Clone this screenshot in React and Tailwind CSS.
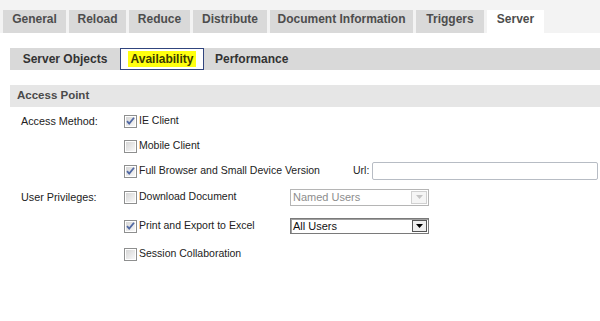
import React from "react";

function Check({ checked }) {
  return (
    <svg width="13" height="13" viewBox="0 0 13 13" className="shrink-0">
      <defs>
        <linearGradient id="cbg" x1="0" y1="0" x2="1" y2="1">
          <stop offset="0" stopColor="#d6d6d6" />
          <stop offset="1" stopColor="#f8f8f8" />
        </linearGradient>
      </defs>
      <rect x="0.5" y="0.5" width="12" height="12" fill="#ffffff" stroke="#8e8f8f" />
      <rect x="2" y="2" width="9" height="9" fill="url(#cbg)" />
      {checked && (
        <path d="M3 6.2 L5.2 8.6 L10 2.8" fill="none" stroke="#5068a3" strokeWidth="1.8" />
      )}
    </svg>
  );
}

function CheckItem({ checked, label }) {
  return (
    <div className="flex items-center gap-[2px] whitespace-nowrap">
      <Check checked={checked} />
      <span className="text-[10.5px] text-[#222]">{label}</span>
    </div>
  );
}

const tabs = [
  ["General", "w-[63px]"],
  ["Reload", "w-[57px]"],
  ["Reduce", "w-[61px]"],
  ["Distribute", "w-[74px]"],
  ["Document Information", "w-[143px]"],
  ["Triggers", "w-[68px]"],
];

export default function App() {
  return (
    <div className="w-[600px] h-[321px] bg-white overflow-hidden font-['Liberation_Sans',Arial,sans-serif]">
      {/* main tabs */}
      <div className="h-[33px] bg-[#f3f3f3] pt-[10px] pl-[3px] flex gap-[3px]">
        {tabs.map(([t, w]) => (
          <div
            key={t}
            className={`${w} h-[23px] bg-[#d9d9d9] text-center pt-[2px] leading-[15px] text-[12px] font-bold text-[#4d4d4d] whitespace-nowrap`}
          >
            {t}
          </div>
        ))}
        <div className="w-[57px] h-[23px] bg-white text-center pt-[2px] leading-[15px] text-[12px] font-bold text-[#4d4d4d]">
          Server
        </div>
      </div>

      {/* sub tabs */}
      <div className="mt-[15px] ml-[10px] h-[22px] bg-[#d9d9d9] flex text-[12px] font-bold text-[#333] leading-[20px]">
        <div className="w-[110px] text-center leading-[22px]">Server Objects</div>
        <div className="w-[84px] h-[22px] border border-[#31457e] bg-white flex items-center justify-center">
          <span className="bg-[#ffff10] px-[3px] leading-[16px] text-[#3a3a00]">Availability</span>
        </div>
        <div className="pl-[11px] leading-[22px]">Performance</div>
      </div>

      {/* section header */}
      <div className="mt-[15px] ml-[10px] h-[22px] bg-[#e6e6e6] flex items-center pl-[7px] text-[11.5px] font-bold text-[#4a4a4a]">
        Access Point
      </div>

      {/* form */}
      <div className="pt-[2px] text-[10.8px] text-[#222]">
        <div className="h-[24px] flex items-center">
          <div className="w-[124px] pl-[21px]">Access Method:</div>
          <CheckItem checked label="IE Client" />
        </div>
        <div className="h-[26px] flex items-center">
          <div className="w-[124px]" />
          <CheckItem label="Mobile Client" />
        </div>
        <div className="h-[24px] flex items-center">
          <div className="w-[124px] shrink-0" />
          <div className="w-[229px] shrink-0">
            <CheckItem checked label="Full Browser and Small Device Version" />
          </div>
          <span className="shrink-0 whitespace-nowrap mr-[3px] text-[10.5px]">Url:</span>
          <div className="w-[226px] shrink-0 h-[18px] border border-[#b7bcc4] rounded-[2px] bg-white" />
        </div>
        <div className="h-[28px] flex items-center">
          <div className="w-[124px] pl-[21px]">User Privileges:</div>
          <div className="w-[166px]">
            <CheckItem label="Download Document" />
          </div>
          <div className="w-[139px] h-[17px] border border-[#b5b5b5] bg-white flex items-center justify-between">
            <span className="pl-[2px] text-[11px] text-[#8d8d8d]">Named Users</span>
            <div className="w-[16px] h-[13px] mr-[1px] border border-[#d0d0d0] bg-[#f5f5f5] flex items-center justify-center">
              <svg width="7" height="4" viewBox="0 0 7 4">
                <path d="M0 0 H7 L3.5 4 Z" fill="#c4c4c4" />
              </svg>
            </div>
          </div>
        </div>
        <div className="h-[30px] flex items-center">
          <div className="w-[124px]" />
          <div className="w-[166px]">
            <CheckItem checked label="Print and Export to Excel" />
          </div>
          <div className="w-[139px] h-[16px] border border-[#7a7a7a] bg-white flex items-center justify-between shadow-[inset_1px_1px_0_#a0a0a0]">
            <span className="pl-[2px] text-[11px] text-[#111]">All Users</span>
            <div className="w-[15px] h-[12px] mr-[1px] border border-[#555] bg-[#efefef] flex items-center justify-center">
              <svg width="7" height="4" viewBox="0 0 7 4">
                <path d="M0 0 H7 L3.5 4 Z" fill="#000" />
              </svg>
            </div>
          </div>
        </div>
        <div className="h-[26px] flex items-center">
          <div className="w-[124px]" />
          <CheckItem label="Session Collaboration" />
        </div>
      </div>
    </div>
  );
}
